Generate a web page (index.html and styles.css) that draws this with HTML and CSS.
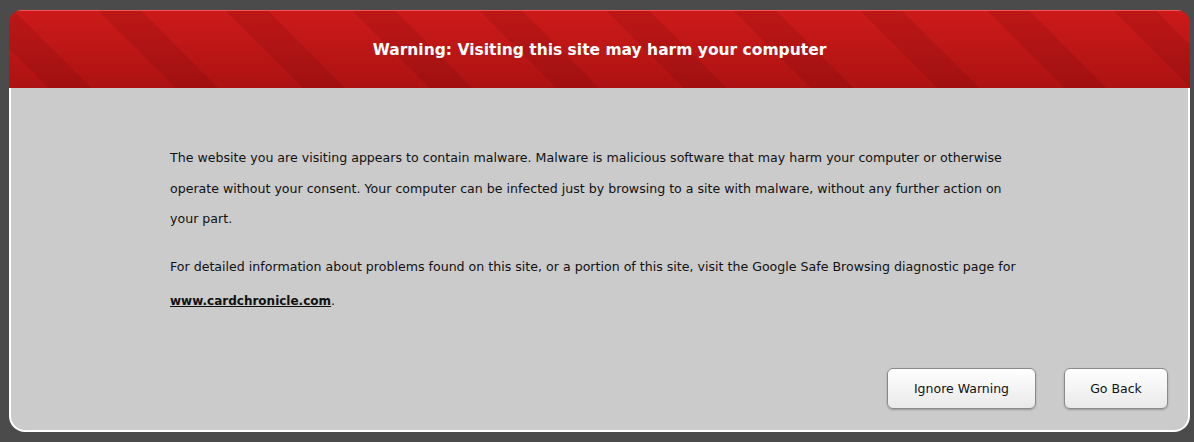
FILE: index.html
```html
<!DOCTYPE html>
<html>
<head>
<meta charset="utf-8">
<link rel="stylesheet" href="styles.css">
</head>
<body>
<div class="panel">
  <div class="header">
    <h1 class="title">Warning: Visiting this site may harm your computer</h1>
  </div>
  <div class="content">
    <div class="text">
      <p class="para">The website you are visiting appears to contain malware. Malware is malicious software that may harm your computer or otherwise operate without your consent. Your computer can be infected just by browsing to a site with malware, without any further action on your part.</p>
      <p class="para">For detailed information about problems found on this site, or a portion of this site, visit the Google Safe Browsing diagnostic page for <a class="link" href="#">www.cardchronicle.com</a>.</p>
    </div>
    <div class="actions">
      <button class="btn btn-ignore">Ignore Warning</button>
      <button class="btn btn-back">Go Back</button>
    </div>
  </div>
</div>
</body>
</html>
```

FILE: styles.css
```css
html, body {
  margin: 0;
  height: 100%;
}
body {
  background: #4b4b4b;
  padding: 10px 4px 0 9px;
  box-sizing: border-box;
  font-family: "DejaVu Sans", "Liberation Sans", sans-serif;
}
.panel {
  height: 422px;
  display: flex;
  flex-direction: column;
}
.header {
  height: 78px;
  flex: none;
  border-radius: 13px 13px 0 0;
  display: flex;
  align-items: center;
  justify-content: center;
  background:
    linear-gradient(rgba(255, 90, 90, 0.9), rgba(255, 90, 90, 0.9)) top / 100% 1px no-repeat,
    repeating-linear-gradient(45deg, rgba(0,0,0,0) 0 27.6px, rgba(60,0,0,0.11) 27.6px 58px, rgba(0,0,0,0) 58px 89.8px),
    linear-gradient(#cd1a1a, #ad1212);
}
.title {
  margin: 0;
  color: #fff;
  font-size: 15.5px;
  font-weight: bold;
  letter-spacing: 0;
  padding-top: 1px;
}
.content {
  flex: 1;
  background: #cbcbcb;
  border: 2px solid #fff;
  border-top: 0;
  border-radius: 0 0 16px 16px;
  display: flex;
  flex-direction: column;
  padding: 55px 0 0 0;
}
.text {
  margin: 0 159px 0 159px;
  font-size: 12.6px;
  line-height: 30.5px;
  color: #111;
}
.para {
  margin: 0 0 17px 0;
}
.link {
  color: #111;
  font-weight: bold;
  font-size: 12px;
  display: inline-block;
  padding-top: 4px;
}
.actions {
  margin-top: auto;
  display: flex;
  justify-content: flex-end;
  gap: 28px;
  padding: 0 20px 21px 0;
}
.btn {
  height: 41px;
  border: 1px solid #8a8a8a;
  border-radius: 6px;
  background: linear-gradient(#ffffff, #f4f4f4 50%, #e9e9e9);
  box-shadow: 0 1px 2px rgba(0,0,0,0.25);
  font-family: "DejaVu Sans", "Liberation Sans", sans-serif;
  font-size: 12.5px;
  color: #111;
  padding: 0;
}
.btn-ignore { width: 149px; }
.btn-back { width: 104px; }
```
